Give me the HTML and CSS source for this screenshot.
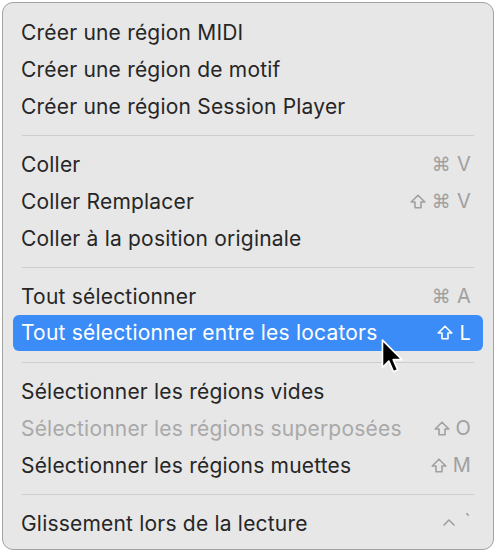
FILE: index.html
```html
<!DOCTYPE html>
<html lang="fr">
<head>
<meta charset="utf-8">
<link rel="stylesheet" href="styles.css">
</head>
<body>
<div class="menu">
  <div class="item"><span class="label">Créer une région MIDI</span></div>
  <div class="item"><span class="label">Créer une région de motif</span></div>
  <div class="item"><span class="label">Créer une région Session Player</span></div>
  <div class="sep"></div>
  <div class="item"><span class="label">Coller</span><span class="key"><span class="cmd">⌘</span>V</span></div>
  <div class="item"><span class="label">Coller Remplacer</span><span class="key"><svg class="shift" viewBox="0 0 16 15"><path d="M8 1.2 L14.8 8 H11 V13.8 H5 V8 H1.2 Z" fill="none" stroke="currentColor" stroke-width="1.6" stroke-linejoin="round"/></svg><span class="cmd">⌘</span>V</span></div>
  <div class="item"><span class="label">Coller à la position originale</span></div>
  <div class="sep"></div>
  <div class="item"><span class="label">Tout sélectionner</span><span class="key"><span class="cmd">⌘</span>A</span></div>
  <div class="item active"><span class="label">Tout sélectionner entre les locators</span><span class="key"><svg class="shift" viewBox="0 0 16 15"><path d="M8 1.2 L14.8 8 H11 V13.8 H5 V8 H1.2 Z" fill="none" stroke="currentColor" stroke-width="1.6" stroke-linejoin="round"/></svg>L</span></div>
  <div class="sep"></div>
  <div class="item"><span class="label">Sélectionner les régions vides</span></div>
  <div class="item disabled"><span class="label">Sélectionner les régions superposées</span><span class="key"><svg class="shift" viewBox="0 0 16 15"><path d="M8 1.2 L14.8 8 H11 V13.8 H5 V8 H1.2 Z" fill="none" stroke="currentColor" stroke-width="1.6" stroke-linejoin="round"/></svg>O</span></div>
  <div class="item"><span class="label">Sélectionner les régions muettes</span><span class="key"><svg class="shift" viewBox="0 0 16 15"><path d="M8 1.2 L14.8 8 H11 V13.8 H5 V8 H1.2 Z" fill="none" stroke="currentColor" stroke-width="1.6" stroke-linejoin="round"/></svg>M</span></div>
  <div class="sep"></div>
  <div class="item"><span class="label">Glissement lors de la lecture</span><span class="key"><svg class="ctrl" viewBox="0 0 14 10"><path d="M2 8 L7 3 L12 8" fill="none" stroke="currentColor" stroke-width="1.6" stroke-linecap="round" stroke-linejoin="round"/></svg><span class="tick">`</span></span></div>
  <svg class="cursor" width="26" height="38" viewBox="0 0 24 36">
    <path d="M2 1 L2 27 L8 21 L12.5 31 L16.5 29.2 L12.2 19.6 L20.5 19.6 Z" fill="#000" stroke="#fff" stroke-width="1.6" stroke-linejoin="round"/>
  </svg>
</div>
</body>
</html>
```
FILE: styles.css
```css
html, body {
  margin: 0;
  padding: 0;
  background: #ffffff;
}
body {
  font-family: "Inter", "Noto Sans", sans-serif;
}
.menu {
  position: relative;
  margin: 2px;
  width: 492px;
  height: 548px;
  box-sizing: border-box;
  border: 1px solid #a3a3a3;
  border-radius: 11px;
  background: #e7e7e7;
  padding: 10.5px 10px 0 10px;
}
.item {
  height: 37px;
  display: flex;
  align-items: center;
  justify-content: space-between;
  padding: 0 12px 0 8px;
  font-size: 21px;
  color: #262626;
  border-radius: 6px;
  letter-spacing: 0.2px;
}
.item.active {
  background: #3b8cf6;
  color: #ffffff;
  height: 36px;
  margin-bottom: 1px;
}
.item.disabled {
  color: #a9a9a9;
}
.key {
  display: flex;
  align-items: center;
  color: #a0a0a0;
  font-size: 20px;
}
.item.active .key {
  color: #ffffff;
}
.cmd {
  font-family: "DejaVu Sans", sans-serif;
  font-size: 19px;
  margin-right: 6px;
}
.shift {
  width: 16px;
  height: 15px;
  margin-right: 6px;
}
.ctrl {
  width: 14px;
  height: 10px;
  margin-right: 8px;
  margin-top: -2px;
}
.tick {
  align-self: flex-start;
  margin-top: -4px;
}
.sep {
  height: 21px;
  display: flex;
  align-items: center;
  padding: 0 9px;
}
.sep::before {
  content: "";
  display: block;
  width: 100%;
  height: 1px;
  background: #cdcdcd;
}
.cursor {
  position: absolute;
  left: 377px;
  top: 336px;
}
```
